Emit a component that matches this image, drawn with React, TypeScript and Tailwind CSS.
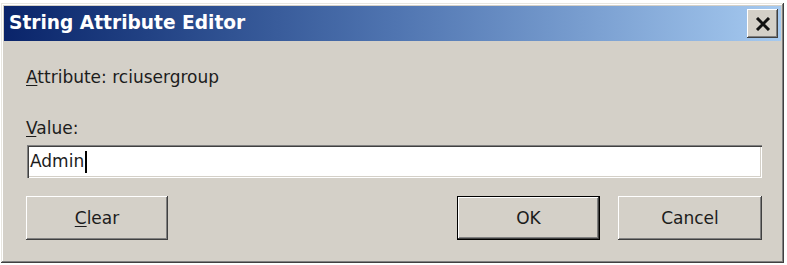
export default function App() {
  return (
    <div className="w-[787px] h-[265px] bg-white pt-[3px] pl-[1px] font-['DejaVu_Sans',sans-serif] text-[17px] text-[#1c1c1c]">
      {/* ventana */}
      <div className="w-[783px] h-[260px] bg-[#d4d0c8] p-[3px] flex flex-col shadow-[inset_-1px_-1px_#404040,inset_1px_1px_#e8e6e0,inset_-2px_-2px_#808080,inset_2px_2px_#ffffff]">
        {/* barra de titulo */}
        <div className="h-[35px] shrink-0 flex items-center justify-between pl-[5px] pr-[3px] bg-gradient-to-r from-[#0a246a] via-[#4f74b0] to-[#a6caf0]">
          <span className="text-white font-bold text-[18.6px] leading-none">String Attribute Editor</span>
          <div className="w-[31px] h-[29px] bg-[#d4d0c8] flex items-center justify-center shadow-[inset_-1px_-1px_#404040,inset_1px_1px_#ffffff,inset_-2px_-2px_#808080]">
            <svg width="16" height="14" viewBox="0 0 16 14">
              <path d="M2 1 L14 13 M14 1 L2 13" stroke="#111" strokeWidth="3" />
            </svg>
          </div>
        </div>

        {/* contenido */}
        <div className="flex flex-col pl-[22px] pr-[19px]">
          <div className="mt-[25px] leading-[22px]">
            <span className="underline underline-offset-2">A</span>ttribute: rciusergroup
          </div>
          <div className="mt-[29px] leading-[22px]">
            <span className="underline underline-offset-2">V</span>alue:
          </div>

          {/* input */}
          <div className="mt-[6px] ml-[1px] h-[33px] bg-white flex items-center pl-[3px] shadow-[inset_1px_1px_#808080,inset_2px_2px_#404040,inset_-1px_-1px_#ffffff,inset_-2px_-2px_#d4d0c8]">
            <span className="leading-none">Admin</span>
            <span className="w-[2px] h-[22px] bg-black ml-[1px]" />
          </div>

          {/* botones */}
          <div className="mt-[18px] flex items-center">
            <button className="w-[142px] h-[44px] pt-[2px] bg-[#d4d0c8] shadow-[inset_-1px_-1px_#404040,inset_1px_1px_#ffffff,inset_-2px_-2px_#808080]">
              <span className="underline underline-offset-2">C</span>lear
            </button>
            <div className="flex-1" />
            <button className="w-[143px] h-[44px] pt-[2px] bg-[#d4d0c8] border border-black shadow-[inset_-1px_-1px_#404040,inset_1px_1px_#ffffff,inset_-2px_-2px_#808080]">
              OK
            </button>
            <button className="ml-[18px] w-[144px] h-[44px] pt-[2px] bg-[#d4d0c8] shadow-[inset_-1px_-1px_#404040,inset_1px_1px_#ffffff,inset_-2px_-2px_#808080]">
              Cancel
            </button>
          </div>
        </div>
      </div>
    </div>
  );
}
